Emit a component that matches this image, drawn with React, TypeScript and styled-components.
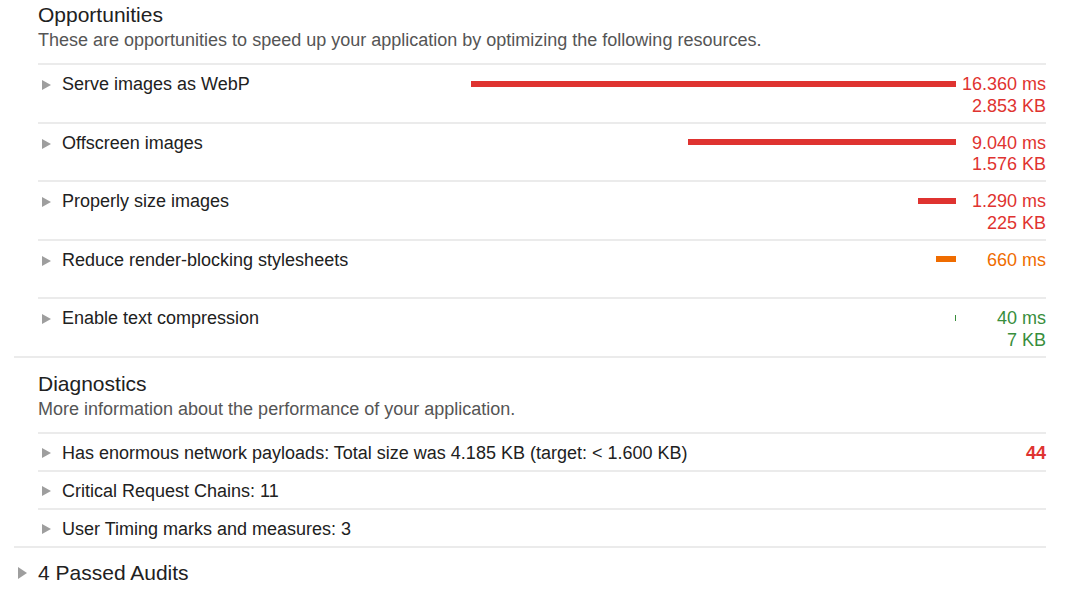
import React from 'react';
import styled, { createGlobalStyle } from 'styled-components';

const GlobalStyle = createGlobalStyle`
  body {
    margin: 0;
    background: #ffffff;
    font-family: "Liberation Sans", Arial, sans-serif;
    color: #212121;
  }
`;

type Tone = 'fail' | 'average' | 'pass';

const toneColors: Record<Tone, string> = {
  fail: '#df3330',
  average: '#ef6c00',
  pass: '#388e3c',
};

const Page = styled.div`
  width: 1032px;
  margin-left: 14px;
`;

const Group = styled.section`
  border-bottom: 2px solid #ebebeb;
  padding-left: 24px;
  & + & {
    margin-top: 11px;
  }
`;

const GroupHeader = styled.header`
  padding-top: 3px;
  margin-bottom: 12px;
`;

const GroupTitle = styled.h2`
  margin: 0;
  font-size: 21px;
  line-height: 24px;
  font-weight: normal;
  color: #212121;
`;

const GroupDescription = styled.p`
  margin: 2px 0 0;
  font-size: 18px;
  line-height: 22px;
  color: #555555;
`;

const AuditRow = styled.div<{ $compact?: boolean }>`
  display: flex;
  align-items: flex-start;
  border-top: 2px solid #ebebeb;
  padding: ${({ $compact }) => ($compact ? '7.8px 0 6.1px' : '9px 0 4.6px')};
  font-size: 18px;
  line-height: ${({ $compact }) => ($compact ? '22px' : '21.5px')};
`;

const Disclosure = styled.span`
  display: flex;
  align-items: center;
  align-self: stretch;
  max-height: 22px;
  &::before {
    content: '';
    width: 0;
    height: 0;
    margin: 0 11px 0 4px;
    border-top: 5.5px solid transparent;
    border-bottom: 5.5px solid transparent;
    border-left: 9px solid #9e9e9e;
  }
`;

const AuditTitle = styled.span`
  flex: 1;
  color: #212121;
  white-space: nowrap;
`;

const BarTrack = styled.div`
  display: flex;
  justify-content: flex-end;
  align-items: center;
  height: 19px;
  width: 490px;
`;

const Bar = styled.div<{ $tone: Tone }>`
  height: 6px;
  min-width: 1px;
  background: ${({ $tone }) => toneColors[$tone]};
`;

const Numbers = styled.div<{ $tone: Tone }>`
  width: 90px;
  text-align: right;
  color: ${({ $tone }) => toneColors[$tone]};
`;

const Score = styled.span`
  color: #df3330;
  font-weight: bold;
`;

const PassedAudits = styled.div`
  display: flex;
  align-items: center;
  margin-top: 13px;
  font-size: 21px;
  line-height: 24px;
  color: #212121;
`;

const PassedToggle = styled.span`
  &::before {
    content: '';
    display: block;
    width: 0;
    height: 0;
    margin: 0 11px 0 4px;
    border-top: 6px solid transparent;
    border-bottom: 6px solid transparent;
    border-left: 9px solid #9e9e9e;
  }
`;

interface Opportunity {
  title: string;
  ms: number;
  kb?: string;
  tone: Tone;
}

const opportunities: Opportunity[] = [
  { title: 'Serve images as WebP', ms: 16360, kb: '2.853 KB', tone: 'fail' },
  { title: 'Offscreen images', ms: 9040, kb: '1.576 KB', tone: 'fail' },
  { title: 'Properly size images', ms: 1290, kb: '225 KB', tone: 'fail' },
  { title: 'Reduce render-blocking stylesheets', ms: 660, tone: 'average' },
  { title: 'Enable text compression', ms: 40, kb: '7 KB', tone: 'pass' },
];

const diagnostics: { title: string; score?: number }[] = [
  {
    title:
      'Has enormous network payloads: Total size was 4.185 KB (target: < 1.600 KB)',
    score: 44,
  },
  { title: 'Critical Request Chains: 11' },
  { title: 'User Timing marks and measures: 3' },
];

const MAX_MS = 16360;
const MAX_BAR = 485;

const formatMs = (ms: number) =>
  ms >= 1000
    ? `${Math.floor(ms / 1000)}.${String(ms % 1000).padStart(3, '0')} ms`
    : `${ms} ms`;

export default function App() {
  return (
    <>
      <GlobalStyle />
      <Page>
        <Group>
          <GroupHeader>
            <GroupTitle>Opportunities</GroupTitle>
            <GroupDescription>
              These are opportunities to speed up your application by optimizing
              the following resources.
            </GroupDescription>
          </GroupHeader>
          {opportunities.map((o) => (
            <AuditRow key={o.title}>
              <Disclosure />
              <AuditTitle>{o.title}</AuditTitle>
              <BarTrack>
                <Bar
                  $tone={o.tone}
                  style={{ width: Math.round((o.ms / MAX_MS) * MAX_BAR) }}
                />
              </BarTrack>
              <Numbers $tone={o.tone}>
                <div>{formatMs(o.ms)}</div>
                <div>{o.kb ?? '\u00a0'}</div>
              </Numbers>
            </AuditRow>
          ))}
        </Group>
        <Group>
          <GroupHeader>
            <GroupTitle>Diagnostics</GroupTitle>
            <GroupDescription>
              More information about the performance of your application.
            </GroupDescription>
          </GroupHeader>
          {diagnostics.map((d) => (
            <AuditRow key={d.title} $compact>
              <Disclosure />
              <AuditTitle>{d.title}</AuditTitle>
              {d.score !== undefined && <Score>{d.score}</Score>}
            </AuditRow>
          ))}
        </Group>
        <PassedAudits>
          <PassedToggle />
          4 Passed Audits
        </PassedAudits>
      </Page>
    </>
  );
}
